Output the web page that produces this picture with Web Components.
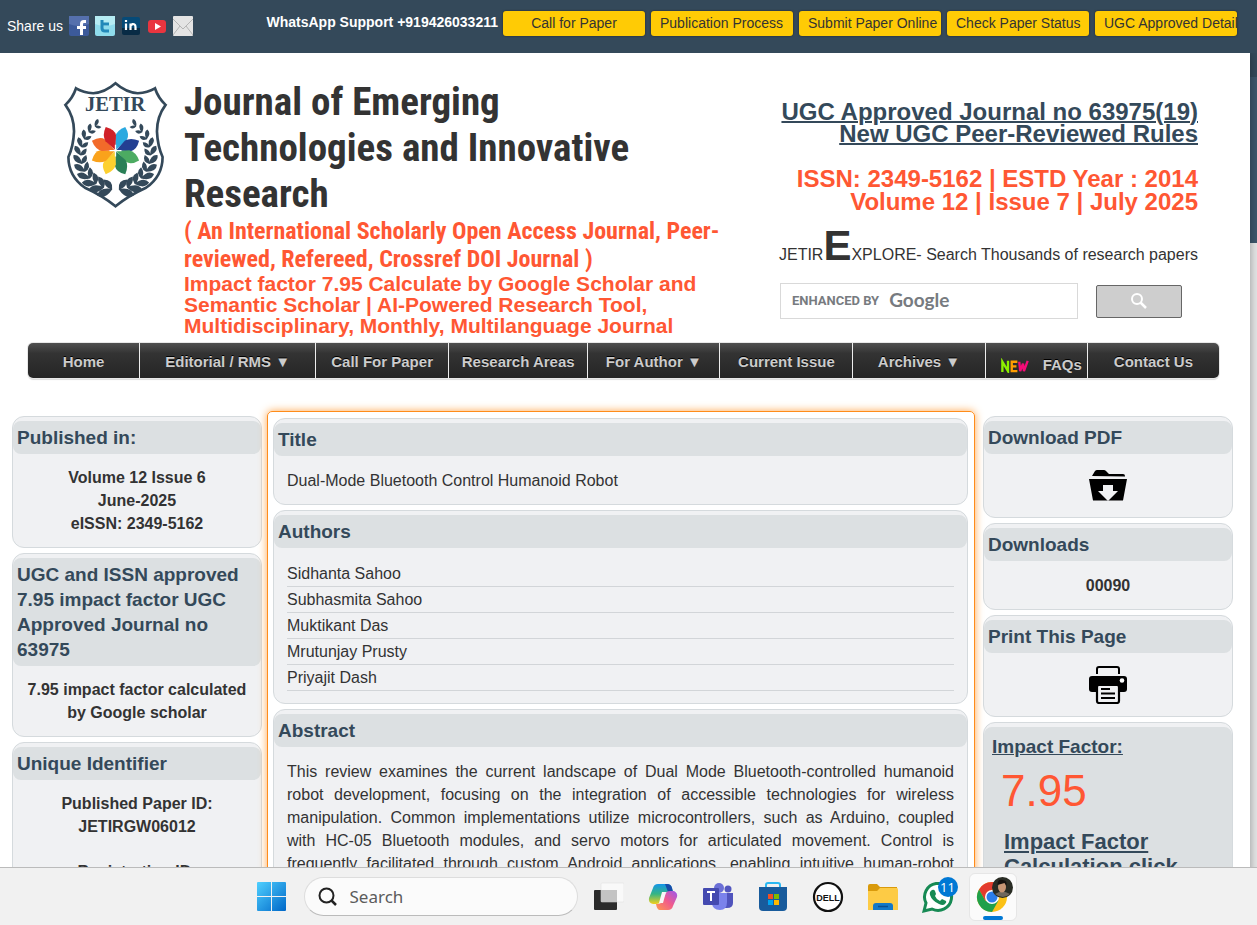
<!DOCTYPE html>
<html lang="en">
<head>
<meta charset="utf-8">
<title>Dual-Mode Bluetooth Control Humanoid Robot | JETIR</title>
<style>
html,body{height:100%;margin:0}
body{font:16px/23px "Liberation Sans",Arial,sans-serif;color:#333;overflow:hidden}
</style>
</head>
<body>
<jetir-desktop></jetir-desktop>

<template id="t-desktop">
<style>
:host{display:flex;flex-direction:column;height:100vh}
main{flex:1;min-height:0;overflow:hidden;background:linear-gradient(#34495a 0 77px,#3d566b 77px 243px,#e3e4e4 243px)}
jetir-topbar{position:relative;z-index:1}
.page{background:#fff;margin-right:7px;box-shadow:0 0 8px rgba(0,0,0,.35);padding-bottom:40px}
.columns{display:grid;grid-template-columns:250px 1fr 250px;margin:33px 17px 0 12px;align-items:start}
.side{display:grid;gap:5px;padding-top:5px}
.center{display:grid;gap:5px;margin:0 8px 0 5px;padding:6px 6px 6px 5px;border:1px solid #ff8c1a;border-radius:5px;box-shadow:0 0 9px #ffa64d}
.center,.right{--body-top:13px}
.big{display:block;font-size:44px;line-height:48px;font-weight:normal;color:#ff5733;padding:8px 0 14px 9px}
a{color:#34495a}
p{margin:0}
.id{margin-bottom:22px}
svg{display:block;margin:auto}
.icon{display:block;line-height:0}
ul{list-style:none;margin:0;padding:0}
li{line-height:25px;border-bottom:1px solid #d2d5d8}
.just{text-align:justify}
.calc{display:block;font-size:22px;line-height:25px;font-weight:bold;margin-left:12px}
</style>
<main>
<jetir-topbar></jetir-topbar>
<div class="page">
<jetir-masthead></jetir-masthead>
<jetir-menu></jetir-menu>
<div class="columns">
<aside class="side">
<info-card heading="Published in:" centered><p>Volume 12 Issue 6<br>June-2025<br>eISSN: 2349-5162</p></info-card>
<info-card heading="UGC and ISSN approved 7.95 impact factor UGC Approved Journal no 63975" centered><p>7.95 impact factor calculated by Google scholar</p></info-card>
<info-card heading="Unique Identifier" centered><p class="id">Published Paper ID:<br>JETIRGW06012</p><p>Registration ID:</p></info-card>
</aside>
<section class="center">
<info-card heading="Title">Dual-Mode Bluetooth Control Humanoid Robot</info-card>
<info-card heading="Authors"><ul><li>Sidhanta Sahoo</li><li>Subhasmita Sahoo</li><li>Muktikant Das</li><li>Mrutunjay Prusty</li><li>Priyajit Dash</li></ul></info-card>
<info-card heading="Abstract"><p class="just">This review examines the current landscape of Dual Mode Bluetooth-controlled humanoid robot development, focusing on the integration of accessible technologies for wireless manipulation. Common implementations utilize microcontrollers, such as Arduino, coupled with HC-05 Bluetooth modules, and servo motors for articulated movement. Control is frequently facilitated through custom Android applications, enabling intuitive human-robot interaction.</p></info-card>
</section>
<aside class="side right">
<info-card heading="Download PDF" centered><a class="icon" href="#pdf" aria-label="Download PDF"><svg width="38" height="38" viewBox="0 0 38 38"><path d="M3 9 6 4q1-1 2-1h7q1 0 2 1l3 3h14q2 0 2 2v.500zM0 12h38l-4 21.500H4z"/><path d="M14 18h10v6h5L19 34 9 24h5z" fill="#f0f1f3"/></svg></a></info-card>
<info-card heading="Downloads" centered>00090</info-card>
<info-card heading="Print This Page" centered><a class="icon" href="#print" aria-label="Print this page"><svg width="38" height="38" viewBox="0 0 38 38"><path d="M8 8V3q0-2 2-2h18q2 0 2 2v5" fill="none" stroke="#000" stroke-width="2"/><path d="M3 10h32q3 0 3 3v10q0 3-3 3H3q-3 0-3-3V13q0-3 3-3z"/><circle cx="33" cy="14.500" r="2.300" fill="#fff"/><rect x="8" y="19" width="22" height="18" rx="2" fill="#f0f1f3" stroke="#000" stroke-width="2.200"/><path d="M12 23h9M12 27.500h14M12 32h14" stroke="#000" stroke-width="2"/></svg></a></info-card>
<info-card tinted><a slot="title" href="#impact">Impact Factor:</a><span slot="title" class="big">7.95</span><a slot="title" class="calc" href="#calculation">Impact Factor Calculation click</a></info-card>
</aside>
</div>
</div>
</main>
<task-bar></task-bar>
</template>

<template id="t-card">
<style>
:host{display:block;box-sizing:border-box;border:1px solid #d5dadd;border-radius:12px;background:#f0f1f3;padding-top:4px}
h2{margin:0;padding:4px;font-size:19px;line-height:25px;color:#34495a;background:#dce0e2;border-radius:8px}
.body{padding:var(--body-top,12px) 13px 12px}
:host([centered]) .body{text-align:center;font-weight:bold;padding-left:10px;padding-right:10px}
:host([tinted]) h2{padding:7px 8px}
</style>
<h2><slot name="title"></slot></h2>
<div class="body"><slot></slot></div>
</template>

<template id="t-topbar">
<style>
:host{display:flex;align-items:flex-start;height:53px;padding:11px 20px 0 7px;box-sizing:border-box;background:#34495a;color:#fff;font-size:14px;line-height:24px}
.share{display:flex;align-items:center;gap:6px;margin-top:3px;flex:1}
.share a,.share svg{display:block}
b{margin-right:5px;white-space:nowrap;line-height:22px}
nav{display:flex;gap:6px;min-width:0}
nav a{flex:0 0 142px;box-sizing:border-box;min-width:0;height:25px;padding-left:9px;background:#ffcb05;color:#333;border-radius:3px;text-decoration:none;overflow:hidden;white-space:nowrap;box-shadow:0 0 2px #222}
nav .mid{padding-left:0;text-align:center}
</style>
<div class="share"><span>Share us</span>
<a href="#fb" aria-label="Facebook"><svg width="20" height="20"><rect width="20" height="20" rx="2" fill="#3c5a9a"/><path d="M0 0h20v8Q10 12 0 8z" fill="#5570ad"/><path d="M17 4h-2q-4 0-4 4v2H8v3h3v6h3v-6h3v-3h-3V8q0-1 1-1h2z" fill="#fff"/></svg></a>
<a href="#tw" aria-label="Twitter"><svg width="20" height="20"><rect width="20" height="20" rx="2" fill="#8fdcec"/><path d="M0 0h20v8Q10 12 0 8z" fill="#b5ecf3"/><path d="M7 4v8q0 3 3 3h4M7 8h7" fill="none" stroke="#2389b9" stroke-width="3"/></svg></a>
<a href="#in" aria-label="LinkedIn"><svg width="20" height="20"><rect x="1" y="1" width="18" height="17" rx="2" fill="#064a77"/><path d="M1 12h18v5q0 2-2 2H3q-2 0-2-2z" fill="#082b45"/><path d="M5 7.500v6.500M9.500 14V7.500M9.500 10q2-3 4-1.500 1 .5 1 2.500v3M5 4v2" fill="none" stroke="#fff" stroke-width="2.200"/></svg></a>
<a href="#yt" aria-label="YouTube"><svg width="20" height="20"><rect x="1" y="4" width="18" height="13" rx="3" fill="#e9353f"/><path d="M8 7v7l6-3.500z" fill="#fff"/></svg></a>
<a href="#mail" aria-label="Email"><svg width="20" height="20"><rect width="20" height="20" rx="1" fill="#e4e4e4"/><path d="M0 3l10 10L20 3M0 19l7-9M20 19l-7-9" fill="none" stroke="#b4b4b4"/></svg></a>
</div>
<b>WhatsApp Support +919426033211</b>
<nav><a class="mid" href="#call">Call for Paper</a><a href="#process">Publication Process</a><a href="#submit">Submit Paper Online</a><a href="#status">Check Paper Status</a><a href="#ugc">UGC Approved Detail</a></nav>
</template>

<template id="t-masthead">
<style>
:host{display:flex;padding:26px 52px 7px 62px;align-items:flex-start}
jetir-logo{margin:1px 15px 0 0;flex:none}
.name{flex:1;min-width:0;max-width:560px;font-weight:bold;color:#ff5733}
h1,h2,p{margin:0}
h1,h2{font-family:"Roboto Condensed","Open Sans Condensed",Roboto,sans-serif;white-space:nowrap}
h1{font-size:39px;line-height:46px;color:#333}
h2{font-size:24px;line-height:28px}
.name p{font-size:21px;line-height:21px}
.facts{margin-left:auto;padding-top:22px;text-align:right;font-size:24px;line-height:22px;font-weight:bold}
.facts a{color:#34495a;display:block;text-decoration-thickness:2px}
.issn{color:#ff5733;line-height:23px;margin:22px 0 17px}
.explore{font-size:16px;font-weight:normal;line-height:46px;white-space:nowrap}
.explore b{font-size:42px;line-height:32px}
form{display:flex;gap:18px;margin:5px 16px 0 1px;align-items:center}
.field{position:relative;flex:1}
input{display:block;width:100%;height:36px;box-sizing:border-box;border:1px solid #d9d9d9;padding:0 10px;font:16px "Liberation Sans",sans-serif}
.brand{position:absolute;left:12px;top:6px;display:flex;gap:10px;font:bold 13px/24px Roboto,sans-serif;color:#777b80;pointer-events:none}
.brand span{font-size:19px;line-height:22px;font-family:Lato,sans-serif}
button{width:86px;height:33px;border:1px solid #666;border-radius:2px;background:#cecece;padding:0}
button svg{display:block;margin:auto}
</style>
<jetir-logo></jetir-logo>
<div class="name"><h1>Journal of Emerging<br>Technologies and Innovative<br>Research</h1><h2>( An International Scholarly Open Access Journal, Peer-<br>reviewed, Refereed, Crossref DOI Journal )</h2><p>Impact factor 7.95 Calculate by Google Scholar and<br>Semantic Scholar | AI-Powered Research Tool,<br>Multidisciplinary, Monthly, Multilanguage Journal</p></div>
<div class="facts"><a href="#ugc19">UGC Approved Journal no 63975(19)</a><a href="#rules">New UGC Peer-Reviewed Rules</a>
<p class="issn">ISSN: 2349-5162 | ESTD Year : 2014<br>Volume 12 | Issue 7 | July 2025</p>
<p class="explore">JETIR<b>E</b>XPLORE- Search Thousands of research papers</p>
<form><div class="field"><input type="text" aria-label="Search papers"><div class="brand">ENHANCED BY <span>Google</span></div></div><button type="button" aria-label="Search"><svg width="18" height="18"><circle cx="7" cy="7" r="5" fill="none" stroke="#fff" stroke-width="2"/><path d="M10.500 10.500L16 16" stroke="#fff" stroke-width="2.500"/></svg></button></form></div>
</template>

<template id="t-menu">
<style>
:host{display:block;margin:0 31px 0 28px}
nav{display:grid;grid-template-columns:112fr 176fr 133fr 139fr 132fr 133fr 132fr 102fr 132fr;border-radius:5px;overflow:hidden;background:#eee;gap:1px;box-shadow:0 0 0 1px #e8e8e8,0 2px 1px #ddd}
a{display:block;box-sizing:border-box;height:35px;font-size:15px;line-height:37px;font-weight:bold;text-align:center;text-decoration:none;white-space:nowrap;color:#ccc;background:linear-gradient(#505050,#333 30%,#252525);text-shadow:0 -1px 0 #000}
.faq{display:flex;align-items:center;justify-content:flex-end;gap:12px;padding:9px 5px 0 0;line-height:24px}
</style>
<nav><a href="#home">Home</a><a href="#editorial">Editorial / RMS ▼</a><a href="#cfp">Call For Paper</a><a href="#areas">Research Areas</a><a href="#author">For Author ▼</a><a href="#issue">Current Issue</a><a href="#archives">Archives ▼</a><a class="faq" href="#faq"><svg width="31" height="15" viewBox="0 0 32 16" role="img" aria-label="New"><g fill="none" stroke-width="2.500"><path d="M2 15V4l6 10V3" stroke="#8df000"/><path d="M18 4h-6v10h6M12 9h5" stroke="#ff9d00"/><path d="M20 4l1 10 3-8 1 8 4-11" stroke="#f50b77"/></g></svg>FAQs</a><a href="#contact">Contact Us</a></nav>
</template>

<template id="t-taskbar">
<style>
:host{display:flex;align-items:center;box-sizing:border-box;height:58px;flex:none;background:#f1f1f1;border-top:1px solid #bbb;justify-content:center;padding-left:7px}
svg{display:block}
button{width:48px;height:48px;border:1px solid transparent;border-radius:6px;background:none;padding:0;display:grid;place-items:center;position:relative;flex:none}
.apps{display:flex;gap:7px;margin-left:6px}
.search{display:flex;align-items:center;gap:12px;box-sizing:border-box;width:274px;height:39px;border:1px solid #ddd;border-bottom-color:#bbb;border-radius:20px;background:#fbfbfb;padding-left:13px;margin-left:8px}
.search input{border:0;background:none;outline:0;padding:0;width:180px;font:17px "Noto Sans","Open Sans",sans-serif}
.search input::placeholder{color:#5c5c5c;opacity:1}
.active{background:#fbfbfb;border-color:#e6e6e6}
.active::after{content:"";position:absolute;left:13px;bottom:0;width:20px;height:4px;border-radius:2px;background:#0078d4}
.badge{position:absolute;right:3px;top:3px;width:20px;height:20px;border-radius:10px;background:#0078d4;color:#fff;font:13px/20px "Open Sans",sans-serif}
</style>
<button aria-label="Start"><svg width="29" height="29"><defs><linearGradient id="win" gradientUnits="userSpaceOnUse" x1="0" y1="0" x2="29" y2="29"><stop stop-color="#4fd0ff"/><stop offset="1" stop-color="#0067c8"/></linearGradient></defs><path d="M0 1q0-1 1-1h13v14H0zM15 0h13q1 0 1 1v13H15zM0 15h14v14H1q-1 0-1-1zM15 15h14v13q0 1-1 1H15z" fill="url(#win)"/></svg></button>
<label class="search"><svg width="20" height="20"><circle cx="8.500" cy="8.500" r="7" fill="none" stroke="#222" stroke-width="2"/><path d="M13.500 13.500L18 18" stroke="#222" stroke-width="2.500"/></svg><input type="text" placeholder="Search" aria-label="Search Windows"></label>
<div class="apps">
<button aria-label="Task view"><svg width="32" height="32"><rect x="2" y="9" width="23" height="20" rx="1" fill="#2b2b2b"/><rect x="9" y="2" width="23" height="19" rx="1" fill="#f9f9f9" stroke="#ddd" stroke-width=".5"/><rect x="9" y="9" width="16" height="12" fill="#c3c3c3"/></svg></button>
<button aria-label="Copilot"><svg width="30" height="30" viewBox="0 0 30 30"><defs><linearGradient id="c1" x1="0" y1="0" x2="0" y2="1"><stop stop-color="#1595e8"/><stop offset=".5" stop-color="#35b584"/><stop offset="1" stop-color="#f3d01c"/></linearGradient><linearGradient id="c2" x1="1" y1="0" x2="0" y2="1"><stop stop-color="#9b58ed"/><stop offset=".5" stop-color="#f15b8c"/><stop offset="1" stop-color="#ff9a4d"/></linearGradient></defs><path d="M5 6q1-4 5-4h9q4 0 5 4l1 4h-6q-3 0-4 4l-2 5q-1 3-5 3H5q-5-1-4-6z" fill="url(#c1)"/><path d="M17 2h2q4 0 5 4l1 4h-5z" fill="#174ca9"/><path d="M25 24q-1 4-5 4h-8q-3 0-4-6h2q3 0 4-3l3-6q1-4 5-4h4q4 2 3 6z" fill="url(#c2)"/><path d="M14 10h4l-3 11h-4z" fill="#f7f7f7"/></svg></button>
<button aria-label="Teams"><svg width="32" height="30" viewBox="0 0 32 30"><circle cx="17" cy="6" r="5" fill="#6b6fd6"/><circle cx="26" cy="7" r="3.500" fill="#5357c0"/><path d="M22 11h9v10q0 5-6 5h-3z" fill="#5054bd"/><path d="M10 11h15v9q0 8-7 8-8 0-8-8z" fill="#7b83eb"/><rect x="1" y="6" width="16" height="17" rx="1" fill="#444ab0"/><path d="M5 10h8M9 10v9" stroke="#fff" stroke-width="2"/></svg></button>
<button aria-label="Store"><svg width="30" height="30" viewBox="0 0 30 30"><path d="M8 7V3q0-2 2-2h10q2 0 2 2v4" fill="none" stroke="#29b8f2" stroke-width="2"/><path d="M1 5h28v20q0 4-4 4H5q-4 0-4-4z" fill="#185b9c"/><path d="M10 12h5v5h-5z" fill="#f25022"/><path d="M16 12h5v5h-5z" fill="#7fba00"/><path d="M10 18h5v5h-5z" fill="#00a4ef"/><path d="M16 18h5v5h-5z" fill="#ffb900"/></svg></button>
<button aria-label="Dell"><svg width="32" height="32"><circle cx="16" cy="16" r="14" fill="#fff" stroke="#111" stroke-width="2.200"/><text x="16" y="20" text-anchor="middle" font-family="Liberation Sans" font-weight="bold" font-size="9" fill="#111">DELL</text></svg></button>
<button aria-label="Files"><svg width="32" height="30" viewBox="0 0 32 30"><path d="M1 4q0-2 2-2h7l3 3h17v8H1z" fill="#d99a0b"/><path d="M1 9h9l3-3h17q1 0 1 2v20H1z" fill="#fdcb45"/><path d="M6 28v-4q0-3 3-3h14q3 0 3 3v4z" fill="#1478c8"/><path d="M11 24.500h10" stroke="#0b4f91" stroke-width="1.500"/></svg></button>
<button aria-label="WhatsApp"><svg width="34" height="34" viewBox="0 0 34 34"><path d="M3 31l2-8A13.500 13.500 0 1 1 11 29z" fill="#fff" stroke="#178a54" stroke-width="3"/><path d="M11 10q2-1 3 1l1 3-1 2q1 3 5 5l2-2 4 2q1 1-1 3-2 2-6 0-7-3-9-9-1-3 2-5z" fill="#178a54"/></svg><span class="badge">11</span></button>
<button class="active" aria-label="Chrome"><svg width="40" height="40" viewBox="0 0 40 40"><circle cx="19" cy="20" r="15" fill="#fbc116"/><path d="M6 12.500A15 15 0 0 1 32 12.500H19L12.500 24z" fill="#e33b2e"/><path d="M6 12.500A15 15 0 0 0 19 35L25.500 23.500 12.500 24z" fill="#20a04b"/><circle cx="19" cy="20" r="7" fill="#fff"/><circle cx="19" cy="20" r="5.500" fill="#2b7de9"/><circle cx="29.500" cy="10.500" r="10.500" fill="#292c24"/><path d="M22 17q7-5 15 0-7 6-15 0z" fill="#6f675c"/><ellipse cx="29" cy="10" rx="4" ry="5.500" fill="#c79675"/><path d="M24.500 8q0-6 5-5 5 0 4 6l-2-3z" fill="#15120f"/></svg></button>
</div>
</template>

<script>
const stamp = (host, id) =>
  host.attachShadow({mode: "open"}).append(document.getElementById(id).content.cloneNode(true));

const define = (name, id) => customElements.define(name, class extends HTMLElement {
  constructor() { super(); stamp(this, id); }
});

class InfoCard extends HTMLElement {
  constructor() { super(); stamp(this, "t-card"); }
  connectedCallback() {
    const heading = this.getAttribute("heading");
    if (heading) this.shadowRoot.querySelector("slot[name=title]").textContent = heading;
  }
}

class JetirLogo extends HTMLElement {
  constructor() {
    super();
    const colors = ["#2ba9e0", "#233f92", "#4cab62", "#2a8057", "#fdd02f", "#faa21b", "#f26a2a", "#d02128"];
    const petals = colors.map((c, i) =>
      `<path fill="${c}" transform="rotate(${22.5 + i * 45})" d="M0-2L-17-38Q-20-58 0-77Q23-60 19-42Z"/>`).join("");
    let branch = "";
    for (let i = 0; i < 11; i++) {
      const s = 1.5 - i * 0.075;
      branch += `<g transform="rotate(${192 + i * 13.5}) translate(0-105) scale(${s.toFixed(2)})">` +
        `<path d="M-8 0Q2-24 19-18Q19 0-8 1ZM-8 0Q8-1 13 16Q-6 20-8 0Z"/></g>`;
    }
    this.attachShadow({mode: "open"}).innerHTML = `
<style>:host{display:block;width:107px}svg{display:block}</style>
<svg width="107" height="130" viewBox="36 30 322 392" role="img" aria-label="JETIR logo">
<path d="M197 40Q165 68 130 70Q100 68 78 55Q68 85 46 105Q72 140 72 185Q70 230 55 262Q55 320 105 355Q160 380 197 411Q234 380 289 355Q339 320 339 262Q324 230 322 185Q322 140 348 105Q326 85 316 55Q294 68 264 70Q229 68 197 40Z" fill="#fff" stroke="#34495a" stroke-width="8"/>
<text x="196" y="124" text-anchor="middle" font-family="Liberation Serif" font-weight="bold" font-size="62" fill="#34495a">JETIR</text>
<g fill="#34495a"><g transform="translate(197 255)">${branch}</g><g transform="translate(197 255) scale(-1 1)">${branch}</g></g>
<g transform="translate(197 243)">${petals}<path d="M-18 0H18M0-18V18" stroke="#fff" stroke-width="4"/></g>
</svg>`;
  }
}

customElements.define("info-card", InfoCard);
customElements.define("jetir-logo", JetirLogo);
define("jetir-topbar", "t-topbar");
define("jetir-masthead", "t-masthead");
define("jetir-menu", "t-menu");
define("task-bar", "t-taskbar");
define("jetir-desktop", "t-desktop");
</script>
</body>
</html>
